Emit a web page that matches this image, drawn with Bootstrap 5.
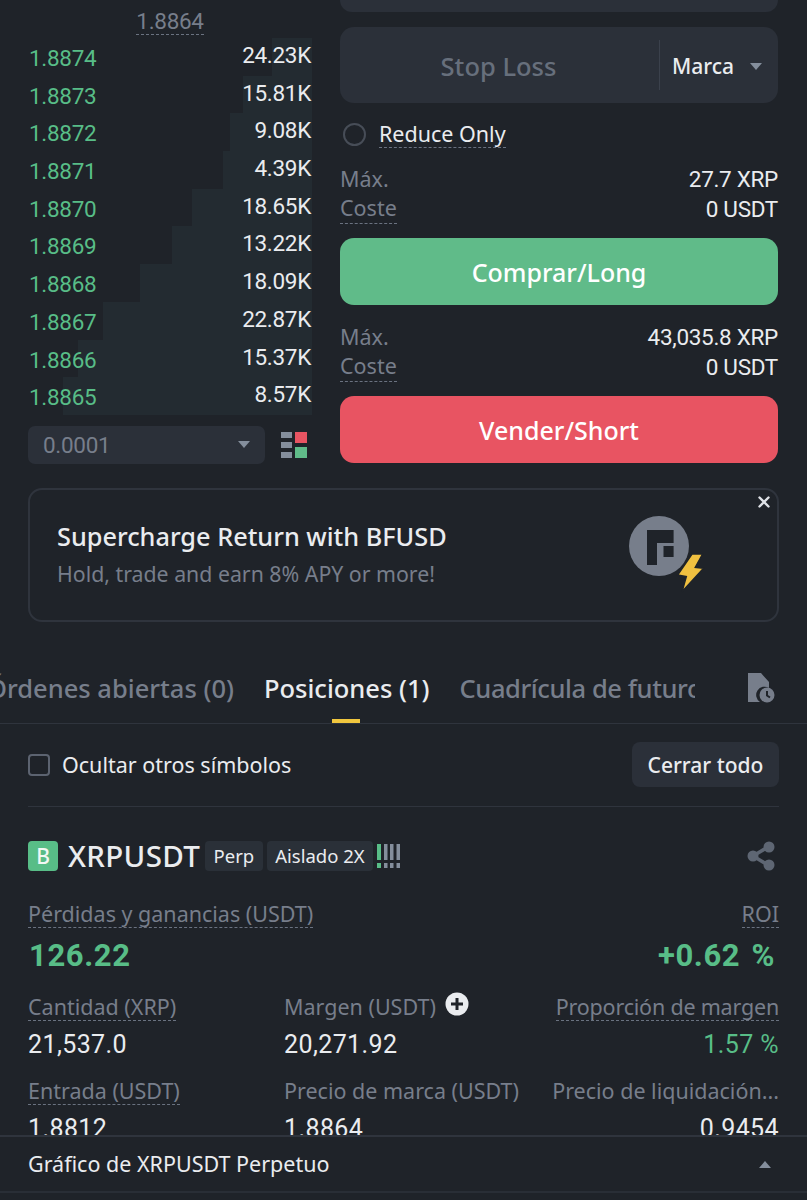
<!DOCTYPE html>
<html lang="es">
<head>
    <meta charset="UTF-8">
    <meta name="viewport" content="width=device-width, initial-scale=1.0">
    <title>XRPUSDT Perpetuo</title>
    <link href="https://cdn.jsdelivr.net/npm/bootstrap@5.3.3/dist/css/bootstrap.min.css" rel="stylesheet">
    <style>
        html, body { height: 1200px; overflow: hidden; }
        body { background-color: #1f2329; color: #eaecef; font-family: "Noto Sans", sans-serif; font-size: 21.5px; line-height: 30px; }
        .screen { height: 1200px; }
        .scroll-area { height: 1135px; overflow: hidden; }
        .num { font-family: Roboto, sans-serif; font-size: 22.5px; letter-spacing: -.3px; }
        .muted-txt { color: #777e8b; }
        .up-txt { color: #58bd87; }
        .dotted { border-bottom: 1px dashed #6a7280; display: inline-block; line-height: 27px; }

        .trade-top { padding: 0 28px; height: 488px; gap: 28px; }
        .book-col { width: 284px; }
        .form-col { width: 438px; }
        .mark-price { height: 38px; padding-top: 9px; text-align: center; line-height: 25px; }
        .mark-price span { border-bottom: 1px dashed #6a7280; display: inline-block; }
        .book-row { position: relative; height: 37.7px; }
        .depth-bar { position: absolute; top: 0; bottom: 0; right: 0; background-color: #232b31; }
        .book-price, .book-qty { position: relative; }
        .book-price { padding-top: 5px; padding-left: 1px; }
        .book-qty { padding-top: 2px; padding-right: 1px; }
        .tick-select { margin-top: 11px; width: 237px; height: 38px; background-color: #2b3039; border-radius: 7px; padding: 0 15px; }
        .tick-icon { margin-top: 11px; }
        .caret-down { width: 0; height: 0; border-left: 6px solid transparent; border-right: 6px solid transparent; border-top: 7px solid #848e9c; }
        .caret-up { width: 0; height: 0; border-left: 6.5px solid transparent; border-right: 6.5px solid transparent; border-bottom: 7px solid #848e9c; margin-right: 8px; }

        .cut-input { height: 12px; background-color: #2b3039; border-radius: 0 0 14px 14px; margin-bottom: 15px; }
        .stop-input { height: 76px; background-color: #2b3039; border-radius: 14px; }
        .stop-label { font-size: 25.5px; font-weight: 500; color: #676f7c; padding-right: 2px; padding-top: 2px; }
        .stop-unit { width: 119px; border-left: 1px solid #3b414c; height: 50px; padding-left: 12px; font-weight: 500; color: #eaecef; font-size: 21px; padding-top: 2px; }
        .radio-dot { width: 23px; height: 23px; border-radius: 50%; border: 2px solid #474d57; margin: 0 13px 0 3px; }
        .reduce-row { margin-top: 15px; height: 32px; margin-bottom: 14px; }
        .info-row { height: 30px; }
        .action-btn { height: 67px; border: 0; border-radius: 14px; color: #fff; font-size: 25px; font-weight: 500; width: 100%; }
        .buy-btn { background-color: #60bb89; margin: 14px 0 17px; }
        .sell-btn { background-color: #e85462; margin-top: 14px; }

        .promo { margin: 0 28px; height: 134px; border: 2px solid #2f343d; border-radius: 14px; position: relative; padding-left: 27px; }
        .promo-title { font-size: 25.3px; font-weight: 500; line-height: 36px; padding-top: 2px; }
        .promo-sub { font-size: 21.3px; color: #777e8b; line-height: 40px; }
        .promo-close { position: absolute; right: 6px; top: 5px; line-height: 0; }
        .promo-icon { position: absolute; left: 598.7px; top: 26px; }

        .tab-strip { margin-top: 35px; height: 67px; border-bottom: 1px solid #2f343d; }
        .tab-clip { width: 708px; overflow: hidden; white-space: nowrap; gap: 30px; margin-left: -13px; }
        .tab-item { font-size: 25.5px; font-weight: 500; color: #777e8b; line-height: 63px; padding-bottom: 3px; position: relative; flex-shrink: 0; }
        .tab-item.on { color: #eaecef; }
        .tab-item.on::after { content: ""; position: absolute; left: 68px; width: 28px; height: 4px; bottom: 0; background-color: #f0c63e; }
        .tab-narrow { letter-spacing: -.4px; }
        .hist-icon { margin: 16px 32px 0 0; }

        .filter-row { margin: 18px 28px 0; height: 65px; padding-bottom: 19px; border-bottom: 1px solid #2f343d; }
        .box-check { width: 22px; height: 22px; border: 2px solid #5c6370; border-radius: 4px; margin-right: 12px; }
        .close-all { background-color: #2b3039; color: #eaecef; border: 0; border-radius: 8px; width: 147px; height: 45px; font-size: 21px; font-weight: 500; padding: 0; }

        .pos-card { padding: 34px 28px 0; }
        .side-badge { width: 30px; height: 30px; background-color: #58bd87; border-radius: 4px; color: #f2f8f4; font-size: 21px; font-weight: 500; text-align: center; margin-right: 10px; }
        .sym-name { font-size: 29.5px; font-weight: 500; margin-right: 5px; letter-spacing: .3px; }
        .chip { background-color: #2a3038; border-radius: 4px; height: 30px; line-height: 29px; font-size: 18.5px; padding: 0 8.5px; margin-right: 4px; }
        .pnl-row { margin-top: 28px; }
        .big-num { font-size: 31px; font-weight: 700; line-height: 44px; padding: 5px 0 0 1px; letter-spacing: .6px; }
        .roi-num { word-spacing: 3px; padding-right: 4px; }
        .stat-grid { display: grid; grid-template-columns: 256px 1fr auto; margin-top: 14px; row-gap: 13px; }
        .stat-val { font-size: 25px; line-height: 36px; margin-top: 5px; letter-spacing: .4px; }
        .tight-label { letter-spacing: -.2px; }

        .chart-bar { height: 58px; border-top: 2px solid #2f343d; border-bottom: 2px solid #292e36; padding: 0 28px; }
    </style>
</head>
<body>
<div class="screen d-flex flex-column">
    <div class="scroll-area">
        <div class="trade-top d-flex">
            <div class="book-col">
                <div class="mark-price num muted-txt"><span>1.8864</span></div>
                <div id="book-rows"></div>
                <div class="d-flex align-items-center">
                    <div class="tick-select num muted-txt d-flex align-items-center justify-content-between">
                        <span>0.0001</span><span class="caret-down"></span>
                    </div>
                    <svg class="tick-icon ms-3" width="26" height="26" viewBox="0 0 26 26">
                        <rect x="0" y="0" width="11" height="6" fill="#848e9c"/>
                        <rect x="0" y="10" width="11" height="6" fill="#848e9c"/>
                        <rect x="0" y="20" width="11" height="6" fill="#848e9c"/>
                        <rect x="14" y="0" width="12" height="11" fill="#e85462"/>
                        <rect x="14" y="15" width="12" height="11" fill="#60bb89"/>
                    </svg>
                </div>
            </div>
            <div class="form-col">
                <div class="cut-input"></div>
                <div class="stop-input d-flex align-items-center">
                    <div class="stop-label flex-grow-1 text-center">Stop Loss</div>
                    <div class="stop-unit d-flex align-items-center justify-content-between pe-3">
                        <span>Marca</span><span class="caret-down"></span>
                    </div>
                </div>
                <div class="reduce-row d-flex align-items-center">
                    <span class="radio-dot"></span><span class="dotted">Reduce Only</span>
                </div>
                <div class="info-row d-flex justify-content-between"><span class="muted-txt">Máx.</span><span class="num">27.7 XRP</span></div>
                <div class="info-row d-flex justify-content-between"><span class="muted-txt dotted">Coste</span><span class="num">0 USDT</span></div>
                <button class="action-btn buy-btn d-block" type="button">Comprar/Long</button>
                <div class="info-row d-flex justify-content-between"><span class="muted-txt">Máx.</span><span class="num">43,035.8 XRP</span></div>
                <div class="info-row d-flex justify-content-between"><span class="muted-txt dotted">Coste</span><span class="num">0 USDT</span></div>
                <button class="action-btn sell-btn d-block" type="button">Vender/Short</button>
            </div>
        </div>

        <div class="promo d-flex flex-column justify-content-center">
            <div class="promo-title">Supercharge Return with BFUSD</div>
            <div class="promo-sub">Hold, trade and earn 8% APY or more!</div>
            <span class="promo-close">
                <svg width="14" height="14" viewBox="0 0 14 14"><path d="M2.5 2.5l9 9M11.5 2.5l-9 9" stroke="#dfe2e7" stroke-width="2.4" stroke-linecap="round"/></svg>
            </span>
            <svg class="promo-icon" width="80" height="80" viewBox="0 0 80 80">
                <circle cx="30" cy="30" r="30" fill="#777e8b"/>
                <path d="M18 14h26.6v13H28v22H18z" fill="#1f2329"/>
                <rect x="34.5" y="30" width="10.1" height="11" fill="#1f2329"/>
                <path d="M63 38h10.6l-7.3 13.3 8.3 1L53 75.7l4.3-15-8.700-1.700z" fill="#f0c040" stroke="#1f2329" stroke-width="1.5"/>
            </svg>
        </div>

        <div class="tab-strip d-flex align-items-start justify-content-between">
            <div class="tab-clip d-flex">
                <span class="tab-item">Órdenes abiertas (0)</span>
                <span class="tab-item on">Posiciones (1)</span>
                <span class="tab-item tab-narrow">Cuadrícula de futuros</span>
            </div>
            <svg class="hist-icon" width="27" height="30" viewBox="0 0 27 30">
                <path d="M0 0h13l8 9v6a8 8 0 0 0-9 14H0z" fill="#777e8b"/>
                <circle cx="19" cy="22" r="7.5" fill="#777e8b"/>
                <path d="M19 18v4.5l3 2" stroke="#1f2329" stroke-width="2" fill="none"/>
            </svg>
        </div>

        <div class="filter-row d-flex align-items-center justify-content-between">
            <div class="d-flex align-items-center"><span class="box-check"></span><span>Ocultar otros símbolos</span></div>
            <button class="close-all" type="button">Cerrar todo</button>
        </div>

        <div class="pos-card">
            <div class="d-flex align-items-center">
                <span class="side-badge">B</span>
                <span class="sym-name">XRPUSDT</span>
                <span class="chip">Perp</span>
                <span class="chip">Aislado 2X</span>
                <svg width="24" height="24" viewBox="0 0 24 24">
                    <rect x="0" y="0" width="4" height="16" fill="#58bd87"/><rect x="0" y="19" width="4" height="5" fill="#58bd87"/>
                    <rect x="7" y="0" width="3.5" height="16" fill="#848e9c"/><rect x="7" y="19" width="3.5" height="5" fill="#848e9c"/>
                    <rect x="13" y="0" width="3.5" height="16" fill="#848e9c"/><rect x="13" y="19" width="3.5" height="5" fill="#848e9c"/>
                    <rect x="19.5" y="0" width="3.5" height="16" fill="#848e9c"/><rect x="19.5" y="19" width="3.5" height="5" fill="#848e9c"/>
                </svg>
                <svg class="ms-auto me-1" width="28" height="30" viewBox="0 0 28 30">
                    <path d="M21 6L6 15l15 9" stroke="#5e6673" stroke-width="3.5" fill="none"/>
                    <circle cx="22" cy="6" r="5.5" fill="#5e6673"/><circle cx="6" cy="15" r="5.5" fill="#5e6673"/><circle cx="22" cy="24" r="5.5" fill="#5e6673"/>
                </svg>
            </div>
            <div class="pnl-row d-flex justify-content-between">
                <div><span class="muted-txt dotted">Pérdidas y ganancias (USDT)</span><div class="big-num num up-txt">126.22</div></div>
                <div class="text-end"><span class="muted-txt dotted">ROI</span><div class="big-num roi-num num up-txt">+0.62 %</div></div>
            </div>
            <div class="stat-grid">
                <div><span class="muted-txt dotted">Cantidad (XRP)</span><div class="stat-val num">21,537.0</div></div>
                <div><span class="muted-txt">Margen (USDT)</span>
                    <svg class="ms-1 align-text-top" width="24" height="24" viewBox="0 0 24 24"><circle cx="12" cy="12" r="11.5" fill="#eaecef"/><path d="M12 6v12M6 12h12" stroke="#1f2329" stroke-width="3"/></svg>
                    <div class="stat-val num">20,271.92</div></div>
                <div class="text-end"><span class="muted-txt dotted tight-label">Proporción de margen</span><div class="stat-val num up-txt">1.57 %</div></div>
                <div><span class="muted-txt dotted">Entrada (USDT)</span><div class="stat-val num">1.8812</div></div>
                <div><span class="muted-txt">Precio de marca (USDT)</span><div class="stat-val num">1.8864</div></div>
                <div class="text-end"><span class="muted-txt">Precio de liquidación...</span><div class="stat-val num">0.9454</div></div>
            </div>
        </div>
    </div>
    <div class="chart-bar d-flex align-items-center justify-content-between">
        <span>Gráfico de XRPUSDT Perpetuo</span>
        <span class="caret-up"></span>
    </div>
</div>
<script src="https://cdn.jsdelivr.net/npm/bootstrap@5.3.3/dist/js/bootstrap.bundle.min.js"></script>
<script>
    // filas del libro: precio, cantidad, ancho de la barra
    const rows = [
        ['1.8874', '24.23K', 40], ['1.8873', '15.81K', 69], ['1.8872', '9.08K', 82],
        ['1.8871', '4.39K', 89], ['1.8870', '18.65K', 120], ['1.8869', '13.22K', 140],
        ['1.8868', '18.09K', 172], ['1.8867', '22.87K', 209], ['1.8866', '15.37K', 234],
        ['1.8865', '8.57K', 249]
    ];
    const bookRows = document.getElementById('book-rows');
    rows.forEach(r => {
        const row = document.createElement('div');
        row.className = 'book-row d-flex justify-content-between num';
        row.innerHTML = `<div class="depth-bar" style="width:${r[2]}px"></div>
            <span class="book-price up-txt">${r[0]}</span><span class="book-qty">${r[1]}</span>`;
        bookRows.appendChild(row);
    });
</script>
</body>
</html>
